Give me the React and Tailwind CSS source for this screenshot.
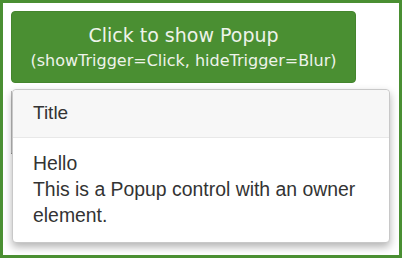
export default function App() {
  return (
    <div className="w-[402px] h-[258px] border-[3px] border-[#4a8f32] bg-white relative overflow-hidden">
      <div className="pt-[8px] pl-[8px]">
        <button
          type="button"
          className="w-[345px] h-[72px] rounded-[4px] bg-[#4a8f32] text-[#eef3ea] flex flex-col items-center justify-center border border-[#44852d]"
          style={{ fontFamily: '"DejaVu Sans", sans-serif' }}
        >
          <span className="text-[19px] leading-[26px]">Click to show Popup</span>
          <span className="text-[16px] leading-[22px] mt-[2px]">(showTrigger=Click, hideTrigger=Blur)</span>
        </button>
        <div className="mt-[8px] mr-[11px] h-[63px] border-b border-l border-r border-[#666] border-l-[#bbb] border-r-[#444]" />
      </div>

      <div
        className="absolute left-[9px] top-[86px] w-[378px] bg-white border border-[#c8c8c8] rounded-[4px] shadow-[0_4px_8px_rgba(0,0,0,0.3)] text-[#333]"
        style={{ fontFamily: '"Liberation Sans", Arial, sans-serif' }}
      >
        <div className="h-[48px] bg-[#f7f7f7] border-b border-[#e8e8e8] rounded-t-[4px] flex items-center px-[20px] text-[19px]">
          Title
        </div>
        <div className="px-[20px] pt-[12px] pb-[14px] text-[19.4px] leading-[26px]">
          <div>Hello</div>
          <div>This is a Popup control with an owner element.</div>
        </div>
      </div>
    </div>
  )
}
